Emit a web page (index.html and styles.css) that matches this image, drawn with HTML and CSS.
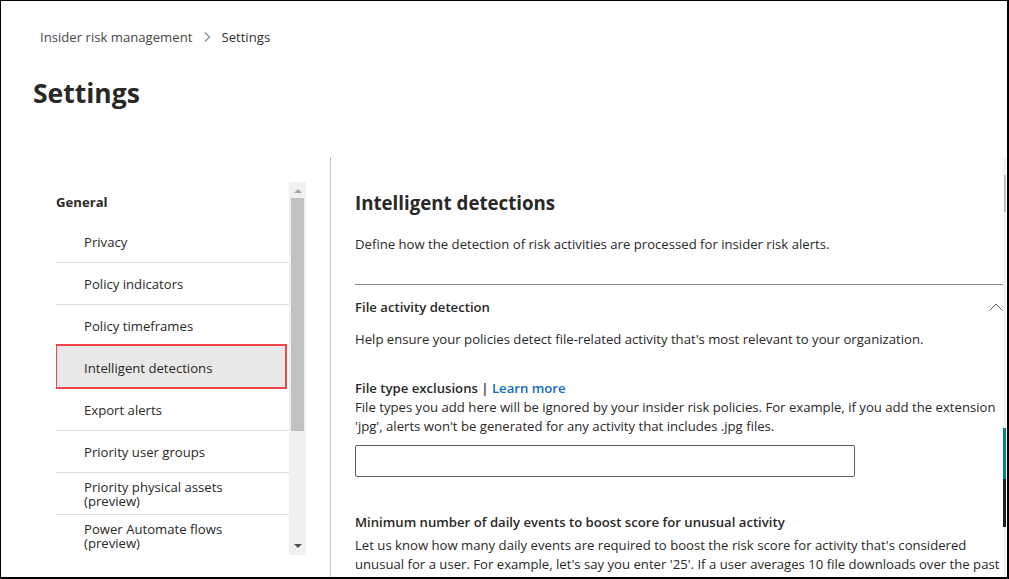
FILE: index.html
```html
<!DOCTYPE html>
<html lang="en">
<head>
<meta charset="utf-8">
<title>Settings</title>
<link rel="stylesheet" href="styles.css">
</head>
<body>
<div class="frame">
  <header class="page-head">
    <nav class="breadcrumb">
      <span class="crumb">Insider risk management</span>
      <svg class="crumb-sep" width="8" height="12" viewBox="0 0 8 12"><path d="M2 1.5 L6.5 6 L2 10.5" fill="none" stroke="#8a8886" stroke-width="1.1"/></svg>
      <span class="crumb current">Settings</span>
    </nav>
    <h1 class="page-title">Settings</h1>
  </header>
  <div class="main">
    <aside class="side">
      <div class="side-scroll">
        <div class="side-list">
          <div class="group-title">General</div>
          <ul class="nav">
            <li class="nav-item"><span class="nav-label">Privacy</span></li>
            <li class="nav-item"><span class="nav-label">Policy indicators</span></li>
            <li class="nav-item"><span class="nav-label">Policy timeframes</span></li>
            <li class="nav-item active"><span class="nav-label">Intelligent detections</span></li>
            <li class="nav-item"><span class="nav-label">Export alerts</span></li>
            <li class="nav-item"><span class="nav-label">Priority user groups</span></li>
            <li class="nav-item"><span class="nav-label">Priority physical assets (preview)</span></li>
            <li class="nav-item"><span class="nav-label">Power Automate flows (preview)</span></li>
          </ul>
        </div>
        <div class="vscroll">
          <span class="arrow up"></span>
          <span class="thumb"></span>
          <span class="arrow down"></span>
        </div>
      </div>
    </aside>
    <section class="content">
      <div class="content-inner">
        <h2 class="sec-title">Intelligent detections</h2>
        <p class="sec-desc">Define how the detection of risk activities are processed for insider risk alerts.</p>
        <div class="panel">
          <div class="panel-head">
            <span class="panel-title">File activity detection</span>
            <svg class="chev" width="14" height="8" viewBox="0 0 14 8"><path d="M0.5 7.5 L7 1 L13.5 7.5" fill="none" stroke="#605e5c" stroke-width="1"/></svg>
          </div>
          <p class="panel-desc">Help ensure your policies detect file-related activity that's most relevant to your organization.</p>
          <div class="field">
            <div class="field-label">File type exclusions | <a class="link" href="#">Learn more</a></div>
            <p class="field-desc">File types you add here will be ignored by your insider risk policies. For example, if you add the extension 'jpg', alerts won't be generated for any activity that includes .jpg files.</p>
            <div class="textbox"></div>
          </div>
          <div class="field field2">
            <div class="field-label">Minimum number of daily events to boost score for unusual activity</div>
            <p class="field-desc">Let us know how many daily events are required to boost the risk score for activity that's considered unusual for a user. For example, let's say you enter '25'. If a user averages 10 file downloads over the past 30 days but a policy detects they downloaded 25 files on one day, the activity's risk score will be boosted.</p>
          </div>
        </div>
      </div>
      <div class="main-scroll">
        <span class="main-thumb"></span>
        <span class="flag teal"></span>
        <span class="flag dark"></span>
      </div>
    </section>
  </div>
</div>
</body>
</html>
```
FILE: styles.css
```css
* { box-sizing: border-box; }
html, body { margin: 0; padding: 0; background: #fff; }
body {
  font-family: "Open Sans", "Noto Sans", "Liberation Sans", sans-serif;
  font-size: 13.15px;
  color: #292827;
}
.frame {
  width: 1009px;
  height: 579px;
  border-style: solid;
  border-color: #000;
  border-width: 1px 2px 2px 1px;
  overflow: hidden;
  display: flex;
  flex-direction: column;
}
.page-head { padding: 26px 0 0 32px; flex: none; height: 156px; }
.breadcrumb { display: flex; align-items: center; height: 20px; padding-left: 7px; }
.crumb { color: #484644; line-height: 20px; }
.crumb.current { color: #323130; }
.crumb-sep { margin: 0 10px 0 11px; }
.page-title {
  margin: 29px 0 0 0;
  font-size: 26.5px;
  line-height: 34px;
  font-weight: 700;
  color: #292827;
}
.main { flex: 1; display: flex; min-height: 0; }
.side { width: 329px; flex: none; padding: 25px 0 0 55px; }
.side-scroll { display: flex; height: 373px; width: 250px; }
.side-list { width: 233px; overflow: hidden; }
.group-title { font-weight: 700; line-height: 20px; padding: 10px 0 9px 0; }
.nav { list-style: none; margin: 0; padding: 0; }
.nav-item {
  height: 42px;
  border-bottom: 1px solid #e1dfdd;
  display: flex;
  align-items: center;
  padding-left: 28px;
  line-height: 14px;
}
.nav-label { max-width: 150px; }
.nav-item.active {
  background: #e8e8e8;
  outline: 2px solid #f0454a;
  outline-offset: -1px;
  margin: -2px 3px 0 0;
  height: 43px;
  padding-top: 4px;
  padding-bottom: 0;
  border-bottom-color: transparent;
}
.nav-item.active + .nav-item { height: 43px; padding-top: 1px; }
.vscroll {
  width: 17px;
  background: #f0f0f0;
  display: flex;
  flex-direction: column;
  align-items: center;
}
.arrow { width: 0; height: 0; border-left: 4px solid transparent; border-right: 4px solid transparent; }
.arrow.up { border-bottom: 4px solid #a3a3a3; margin-top: 7px; margin-bottom: 5px; }
.arrow.down { border-top: 4px solid #505050; margin-top: auto; margin-bottom: 7px; }
.thumb { width: 13px; height: 233px; background: #c1c1c1; }
.content {
  flex: 1;
  display: flex;
  border-left: 1px solid #c8c6c4;
  min-width: 0;
}
.content-inner { flex: 1; padding: 32px 0 0 24px; min-width: 0; }
.sec-title { margin: 0; font-size: 18.7px; line-height: 28px; font-weight: 700; color: #292827; }
.sec-desc { margin: 17px 0 0 0; line-height: 20px; }
.panel { margin-top: 30px; border-top: 1px solid #8a8886; }
.panel-head { display: flex; align-items: center; justify-content: space-between; margin-top: 12px; height: 20px; }
.panel-title { font-weight: 600; line-height: 20px; }
.panel-desc { margin: 12px 0 0 0; line-height: 20px; }
.field { margin-top: 29px; }
.field-label { font-weight: 600; line-height: 20px; }
.link { color: #0f6cbd; text-decoration: none; }
.field-desc { margin: 0; line-height: 19px; }
.textbox { margin-top: 9px; width: 500px; height: 32px; border: 1px solid #605e5c; border-radius: 2px; }
.field2 { margin-top: 35px; }
.field2 .field-desc { margin-top: 4px; }
.main-scroll { width: 3px; flex: none; background: #f0f0f0; position: relative; margin-right: 1px; }
.main-thumb { position: absolute; left: 1px; top: 18px; width: 2px; height: 37px; background: #c2c2c2; }
.flag { position: absolute; left: 0; width: 3px; }
.flag.teal { top: 271px; height: 51px; background: #038387; }
.flag.dark { top: 322px; height: 48px; background: #201f1e; }
```
